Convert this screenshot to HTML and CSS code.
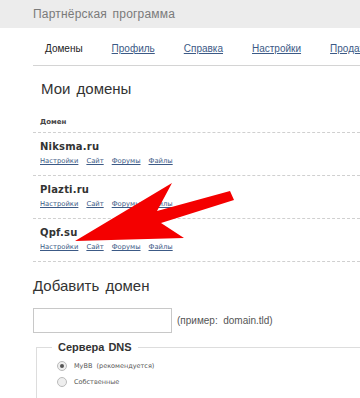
FILE: index.html
```html
<!DOCTYPE html>
<html lang="ru">
<head>
<meta charset="utf-8">
<link rel="stylesheet" href="styles.css">
</head>
<body>
<header class="topbar"><span class="title">Партнёрская программа</span></header>
<main class="wrap">
  <nav class="nav">
    <span class="nav-item current">Домены</span>
    <a class="nav-item" href="#">Профиль</a>
    <a class="nav-item" href="#">Справка</a>
    <a class="nav-item" href="#">Настройки</a>
    <a class="nav-item" href="#">Продажа</a>
  </nav>
  <h2 class="h2 first">Мои домены</h2>
  <div class="thead">Домен</div>
  <div class="row">
    <div class="dname">Niksma.ru</div>
    <div class="links"><a href="#">Настройки</a><a href="#">Сайт</a><a href="#">Форумы</a><a href="#">Файлы</a></div>
  </div>
  <div class="row">
    <div class="dname">Plazti.ru</div>
    <div class="links"><a href="#">Настройки</a><a href="#">Сайт</a><a href="#">Форумы</a><a href="#">Файлы</a></div>
  </div>
  <div class="row">
    <div class="dname">Qpf.su</div>
    <div class="links"><a href="#">Настройки</a><a href="#">Сайт</a><a href="#">Форумы</a><a href="#">Файлы</a></div>
  </div>
  <h2 class="h2 second">Добавить домен</h2>
  <div class="addrow">
    <input class="inp" type="text">
    <span class="hint">(пример:&nbsp; domain.tld)</span>
  </div>
  <fieldset class="dns">
    <legend class="legend">Сервера DNS</legend>
    <label class="opt"><span class="radio on"></span>MyBB&nbsp; (рекомендуется)</label>
    <label class="opt"><span class="radio"></span>Собственные</label>
  </fieldset>
</main>
<svg class="arrow" width="360" height="398" viewBox="0 0 360 398">
  <polygon points="75,241 172,183 157,211 230,191 234,200 161,223 184,238" fill="#f40000"/>
</svg>
</body>
</html>
```
FILE: styles.css
```css
html, body { margin: 0; padding: 0; background: #fff; }
body { width: 360px; height: 398px; overflow: hidden; position: relative; font-family: "Liberation Sans", Arial, sans-serif; }
.topbar { height: 28px; background: #ececec; padding-left: 33px; display: flex; align-items: center; }
.title { font-size: 12px; color: #7a7a7a; letter-spacing: 0.2px; word-spacing: 2px; }
.wrap { margin-left: 33px; }
.nav { display: flex; gap: 29px; padding: 15px 0 0 12px; height: 22px; border-bottom: 1px solid #d4d4d4; white-space: nowrap; }
.nav-item { font-size: 10px; color: #3c5a86; }
.nav-item.current { color: #222; text-decoration: none; }
.h2 { font-weight: normal; font-size: 15px; color: #333; margin: 0; word-spacing: 2px; }
.h2.first { padding: 14px 0 0 8px; height: 26px; }
.thead { font-size: 7px; font-weight: bold; color: #444; padding: 12px 0 0 7px; height: 14px; font-family: "DejaVu Sans", Verdana, sans-serif; border-bottom: 1px dashed #d0d0d0; }
.row { padding: 8px 0 0 7px; height: 34px; border-bottom: 1px dashed #d0d0d0; }
.dname { font-family: "DejaVu Sans", Verdana, sans-serif; font-weight: bold; font-size: 10px; color: #333; height: 14px; letter-spacing: 0.2px; }
.links { display: flex; gap: 8px; font-family: "DejaVu Sans", Verdana, sans-serif; font-size: 6.8px; padding-top: 2px; }
.links a { color: #3c5a86; }
.h2.second { padding: 15px 0 0 0; height: 22px; }
.addrow { display: flex; align-items: center; gap: 5px; margin-top: 9px; }
.inp { box-sizing: border-box; height: 25px; width: 139px; border: 1px solid #c8c8c8; padding: 0; margin: 0; }
.hint { font-size: 10px; color: #555; }
.dns { margin: 8px 0 0 3px; border: none; border-top: 1px solid #ddd; border-left: 1px solid #ddd; padding: 5px 0 20px 15px; }
.legend { font-size: 11px; font-weight: bold; color: #333; padding: 0 6px; margin-left: 0; word-spacing: 1px; }
.opt { display: flex; align-items: center; font-family: "DejaVu Sans", Verdana, sans-serif; font-size: 6.5px; color: #555; height: 16px; padding-left: 5px; }
.radio { width: 8px; height: 8px; border-radius: 50%; border: 1px solid #bbb; background: #eee; margin-right: 7px; position: relative; }
.radio.on::after { content: ""; position: absolute; left: 2px; top: 2px; width: 4px; height: 4px; border-radius: 50%; background: #555; }
.arrow { position: absolute; left: 0; top: 0; pointer-events: none; }
```
